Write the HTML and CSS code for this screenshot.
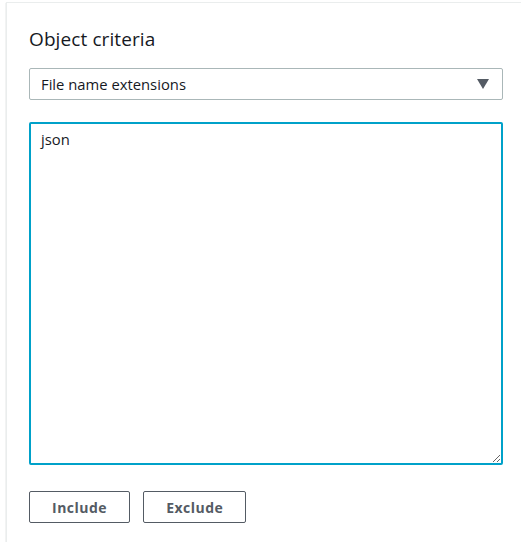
FILE: index.html
```html
<!DOCTYPE html>
<html lang="en">
<head>
  <meta charset="UTF-8">
  <title>Object criteria</title>
  <link rel="stylesheet" href="styles.css">
</head>
<body>
  <div class="panel">
    <h2>Object criteria</h2>

    <div class="select">
      <span>File name extensions</span>
      <svg class="caret" width="12" height="10" viewBox="0 0 12 10"><polygon points="0,0 12,0 6,10" fill="#545b64"/></svg>
    </div>

    <textarea id="criteria" class="criteria" autofocus>json</textarea>

    <div class="actions">
      <button class="btn">Include</button>
      <button class="btn">Exclude</button>
    </div>
  </div>

  <script>
    var box = document.getElementById('criteria');
    box.focus();
    box.setSelectionRange(box.value.length, box.value.length);
  </script>
</body>
</html>
```

FILE: styles.css
```css
body {
    margin: 0;
    font-family: "Open Sans", Arial, sans-serif;
    color: #16191f;
    background: #ffffff;
}

.panel {
    width: 540px;
    margin: 2px 0 0 6px;
    padding: 24px 0 19px 22px;
    border-top: 1px solid #eaeded;
    border-left: 1px solid #eaeded;
    box-shadow: 0 1px 1px 0 rgba(0, 28, 36, 0.3);
    box-sizing: border-box;
}

h2 {
    margin: 0 0 17px;
    font-size: 19px;
    font-weight: normal;
    line-height: 24px;
    letter-spacing: 0.1px;
}

.select {
    width: 474px;
    height: 32px;
    box-sizing: border-box;
    border: 1px solid #aab7b8;
    border-radius: 2px;
    display: flex;
    align-items: center;
    justify-content: space-between;
    padding: 0 13px 0 11px;
    font-size: 14.8px;
}

.criteria {
    display: block;
    width: 474px;
    height: 343px;
    margin-top: 22px;
    box-sizing: border-box;
    border: 2px solid #00a1c9;
    border-radius: 2px;
    padding: 4px 10px;
    font-family: "Open Sans", Arial, sans-serif;
    font-size: 14.8px;
    line-height: 22px;
    color: #16191f;
    caret-color: #16191f;
    outline: none;
    resize: both;
}

.actions {
    display: flex;
    gap: 13px;
    margin-top: 26px;
}

.btn {
    height: 32px;
    padding: 0 22px;
    border: 1px solid #545b64;
    border-radius: 2px;
    background: #ffffff;
    color: #545b64;
    font-family: "Open Sans", Arial, sans-serif;
    font-size: 14px;
    font-weight: bold;
    letter-spacing: 0.5px;
}
```
